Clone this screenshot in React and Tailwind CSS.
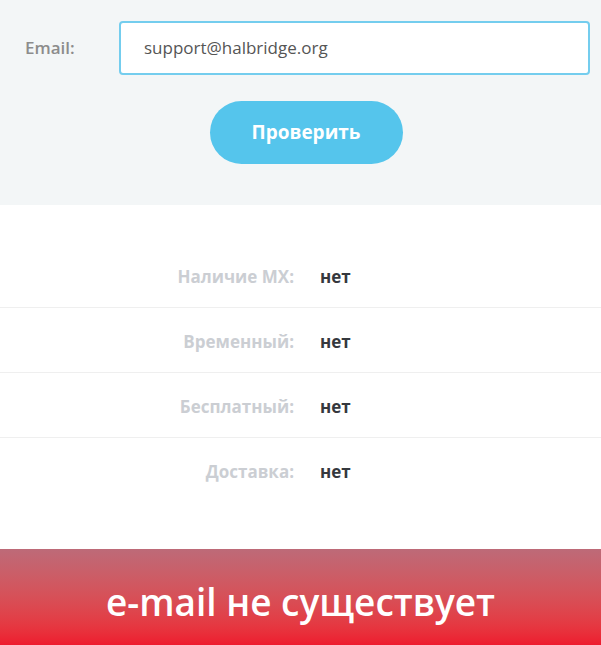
export default function App() {
  const rows = [
    ["Наличие MX:", "нет"],
    ["Временный:", "нет"],
    ["Бесплатный:", "нет"],
    ["Доставка:", "нет"],
  ];
  return (
    <div className="w-[601px] h-[645px] flex flex-col bg-white overflow-hidden" style={{ fontFamily: '"Open Sans", "Noto Sans", sans-serif' }}>
      <div className="h-[205px] bg-[#f3f6f7] flex flex-col items-center pt-[21px]">
        <div className="w-full flex items-center">
          <div className="w-[119px] pl-[25px] text-[17px] font-semibold text-[#8c8c8c]">Email:</div>
          <div className="w-[471px] h-[54px] bg-white border-2 border-[#74cdee] rounded-[4px] flex items-center pl-[23px] text-[17px] text-[#555] font-medium">
            support@halbridge.org
          </div>
        </div>
        <div className="mt-[26px] ml-[11px] w-[193px] h-[63px] rounded-full bg-[#55c5ec] flex items-center justify-center text-white font-bold text-[19px]">
          Проверить
        </div>
      </div>
      <div className="flex-1 flex flex-col pt-[38px]">
        {rows.map(([k, v], i) => (
          <div key={k} className={"h-[65px] flex items-center pt-[3px] " + (i < rows.length - 1 ? "border-b border-[#efefef]" : "")}>
            <div className="w-[294px] text-right text-[17px] font-bold text-[#cbced3]">{k}</div>
            <div className="pl-[26px] text-[17px] font-bold text-[#35383d]">{v}</div>
          </div>
        ))}
      </div>
      <div className="h-[96px] shrink-0 bg-gradient-to-b from-[#bd6a78] to-[#ee1a2e] flex items-center justify-center text-white text-[37px] font-semibold pt-[10px]">
        e-mail не существует
      </div>
    </div>
  );
}
